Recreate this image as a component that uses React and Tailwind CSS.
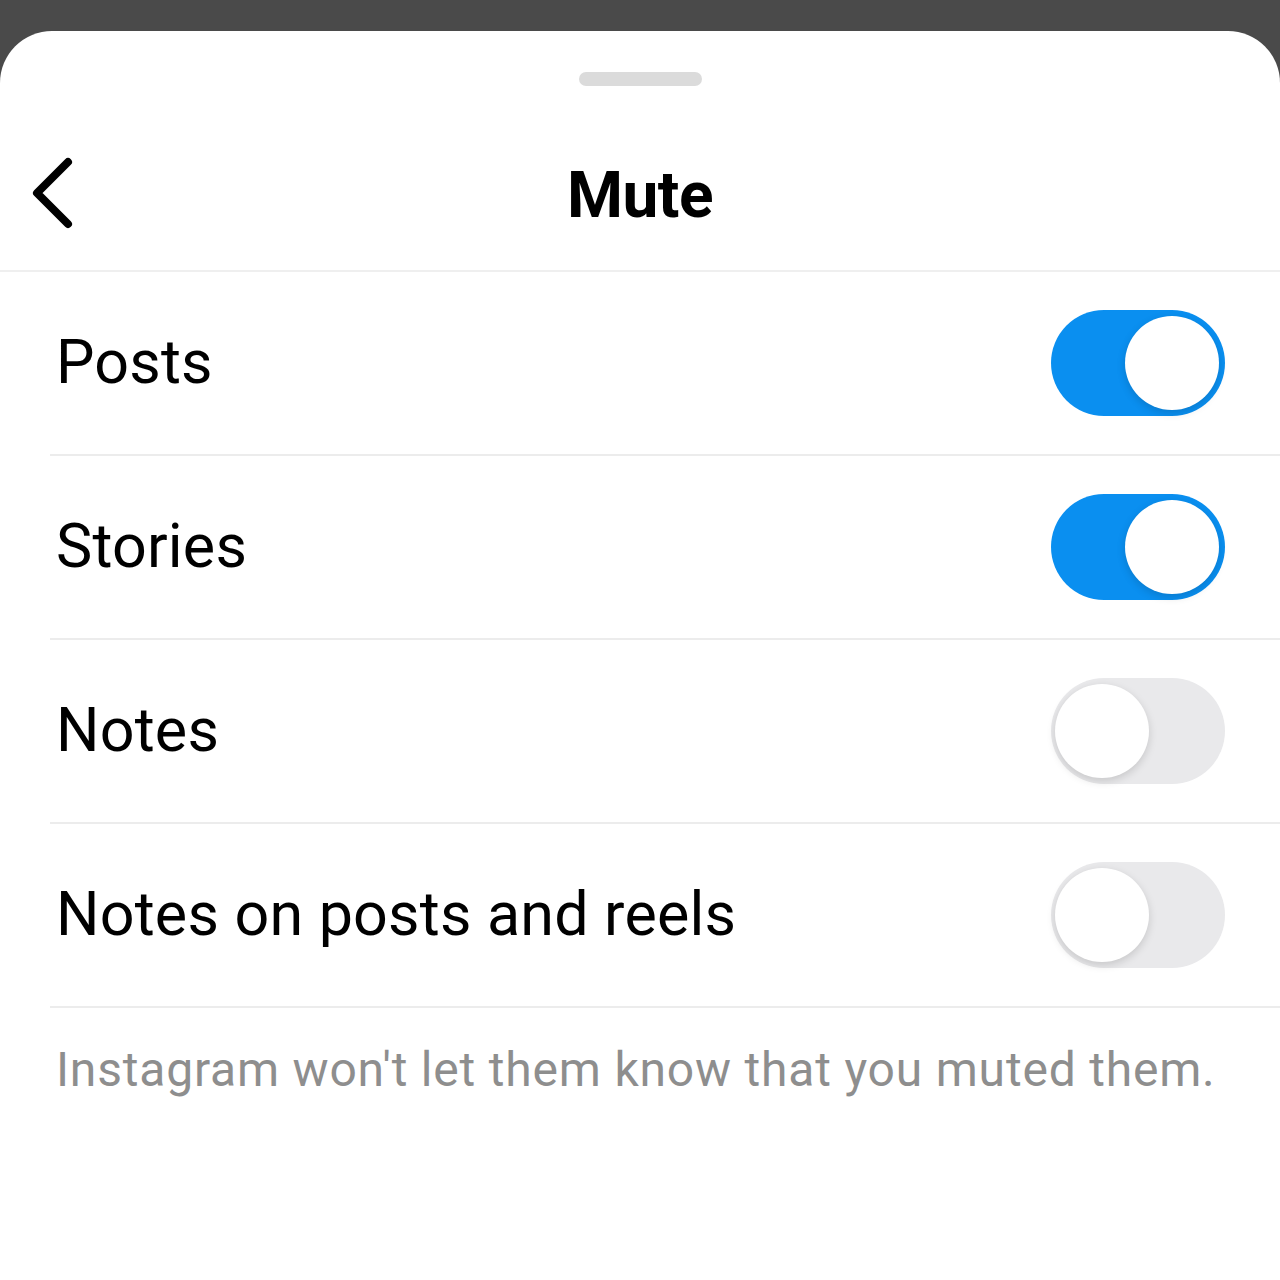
import { useState } from "react";

function Toggle({ on, onClick }) {
  return (
    <button
      onClick={onClick}
      className={
        "relative h-[106px] w-[174px] shrink-0 rounded-full transition-colors " +
        (on ? "bg-[#0a8ff0]" : "bg-[#e9e9eb]")
      }
    >
      <span
        className={
          "absolute top-[6px] h-[94px] w-[94px] rounded-full bg-white shadow-[0_3px_8px_rgba(0,0,0,0.15)] " +
          (on ? "left-[74px]" : "left-[4px]")
        }
      />
    </button>
  );
}

const rows = [
  { label: "Posts", on: true },
  { label: "Stories", on: true },
  { label: "Notes", on: false },
  { label: "Notes on posts and reels", on: false },
];

export default function App() {
  const [state, setState] = useState(rows.map((r) => r.on));

  return (
    <div className="min-h-[1280px] bg-[#4a4a4a] pt-[31px] font-['Roboto',sans-serif]">
      <div className="min-h-[1249px] rounded-t-[52px] bg-white">
        <div className="flex justify-center pt-[41px]">
          <div className="h-[14px] w-[123px] rounded-full bg-[#dbdbdb]" />
        </div>

        <div className="relative flex h-[186px] items-center justify-center border-b-2 border-[#efefef] pt-[36px]">
          <button className="absolute left-[30px] top-[71px]">
            <svg width="46" height="76" viewBox="0 0 46 76" fill="none">
              <path
                d="M38 5 L7 36 L38 67"
                stroke="#000"
                strokeWidth="8"
                strokeLinecap="round"
                strokeLinejoin="round"
              />
            </svg>
          </button>
          <h1 className="text-[64px] font-bold tracking-[-0.5px] text-black">Mute</h1>
        </div>

        <div className="pl-[50px]">
          {rows.map((r, i) => (
            <div
              key={r.label}
              className="flex h-[184px] items-center justify-between border-b-2 border-[#ececec] pl-[6px] pr-[55px]"
            >
              <span className="text-[61px] tracking-[0.2px] text-black">{r.label}</span>
              <Toggle
                on={state[i]}
                onClick={() => setState((s) => s.map((v, j) => (j === i ? !v : v)))}
              />
            </div>
          ))}
        </div>

        <p className="pl-[56px] pt-[26px] text-[48px] tracking-[0.8px] text-[#8e8e8e]">
          Instagram won't let them know that you muted them.
        </p>
      </div>
    </div>
  );
}
